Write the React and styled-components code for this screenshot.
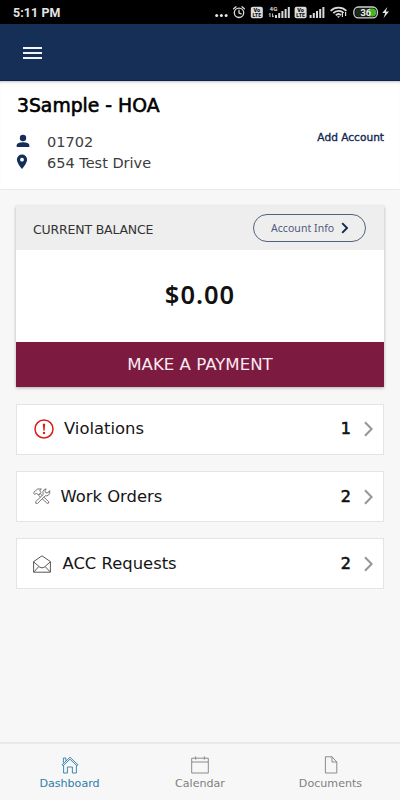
import React from "react"
import styled, { createGlobalStyle } from "styled-components"

const rows = [
    { id: 1, text: "Violations", count: 1, icon: <AlertIcon />, gap: 9 },
    { id: 2, text: "Work Orders", count: 2, icon: <ToolsIcon />, gap: 9.5 },
    { id: 3, text: "ACC Requests", count: 2, icon: <EnvelopeIcon />, gap: 11.5 },
]

const tabs = [
    { id: 1, text: "Dashboard", icon: <HomeIcon />, active: true },
    { id: 2, text: "Calendar", icon: <CalendarIcon /> },
    { id: 3, text: "Documents", icon: <DocumentIcon /> },
]

export default function App() {
    return (
        <Screen>
            <GlobalStyle />
            <StatusBar>
                <Time>5:11 PM</Time>
                <StatusIcons />
            </StatusBar>
            <Header>
                <MenuButton aria-label="Menu">
                    <span />
                    <span />
                    <span />
                </MenuButton>
            </Header>

            <Account>
                <AccountName>3Sample - HOA</AccountName>
                <AccountBody>
                    <div>
                        <AccountLine>
                            <PersonIcon />
                            <span>01702</span>
                        </AccountLine>
                        <AccountLine>
                            <PinIcon />
                            <span>654 Test Drive</span>
                        </AccountLine>
                    </div>
                    <AddAccount>Add Account</AddAccount>
                </AccountBody>
            </Account>

            <Content>
                <Card>
                    <CardHeader>
                        <CardTitle>CURRENT BALANCE</CardTitle>
                        <InfoButton>
                            Account Info
                            <svg width="8" height="12" viewBox="0 0 8 12" fill="none" stroke="#12284f" strokeWidth="1.9">
                                <path d="M1.2 1.2L6 6L1.2 10.8" />
                            </svg>
                        </InfoButton>
                    </CardHeader>
                    <Balance>$0.00</Balance>
                    <PayButton>MAKE A PAYMENT</PayButton>
                </Card>

                {rows.map((row) => (
                    <Row key={row.id}>
                        {row.icon}
                        <RowText $gap={row.gap}>{row.text}</RowText>
                        <Count>{row.count}</Count>
                        <svg width="9" height="16" viewBox="0 0 9 16" fill="none" stroke="#969696" strokeWidth="2">
                            <path d="M1 1.2L7.6 8L1 14.8" />
                        </svg>
                    </Row>
                ))}
            </Content>

            <TabBar>
                {tabs.map((tab) => (
                    <Tab key={tab.id} $active={tab.active}>
                        {tab.icon}
                        {tab.text}
                    </Tab>
                ))}
            </TabBar>
        </Screen>
    )
}

function Signal() {
    return (
        <g fill="#d8d8d8">
            <rect x="0" y="8" width="2" height="3" />
            <rect x="3.2" y="6" width="2" height="5" />
            <rect x="6.4" y="4" width="2" height="7" />
            <rect x="9.6" y="2" width="2" height="9" />
            <rect x="12.8" y="0" width="2" height="11" />
        </g>
    )
}

function Volte() {
    return (
        <g>
            <rect width="12" height="11.5" rx="2" fill="#dcdcdc" />
            <g fill="#111" fontFamily="Roboto, sans-serif" fontSize="5.6" fontWeight="900" textAnchor="middle">
                <text x="6" y="5.4">Vo</text>
                <text x="6" y="10.5" fontSize="5.2">LTE</text>
            </g>
        </g>
    )
}

function StatusIcons() {
    return (
        <svg width="190" height="24" viewBox="210 0 190 24">
            <g fill="#e6e6e6">
                <circle cx="216.7" cy="15.6" r="1.5" />
                <circle cx="221.4" cy="15.6" r="1.5" />
                <circle cx="226.1" cy="15.6" r="1.5" />
            </g>
            <g fill="none" stroke="#dcdcdc" strokeWidth="1.3" strokeLinecap="round">
                <circle cx="239" cy="12.8" r="4.7" />
                <path d="M239 10.2V13L241.2 13.8M233.6 8.8L236 6.8M244.4 8.8L242 6.8" />
            </g>
            <g transform="translate(250.8 6.8)"><Volte /></g>
            <text x="269.6" y="10.6" fill="#dcdcdc" fontFamily="Roboto, sans-serif" fontSize="6.2" fontWeight="700">4G</text>
            <path d="M270 13.5V17M269 14.5L270 13.3M272.6 13.5V17M272.6 17.2L273.8 15.8" stroke="#d0d0d0" strokeWidth="1" fill="none" />
            <g transform="translate(275 7)"><Signal /></g>
            <g transform="translate(294.6 6.8)"><Volte /></g>
            <g transform="translate(309.6 7)"><Signal /></g>
            <g fill="none" stroke="#dcdcdc" strokeWidth="1.7">
                <path d="M330.6 10.8C335 6.5 342 6.5 346.4 10.8M333.2 13.2C336.4 10.2 340.8 10.2 343.6 12.8M335.8 15.4C337.4 13.8 339.6 13.8 341 15.2" />
                <path d="M342.4 13V17M345.6 12V16" strokeWidth="1.2" />
            </g>
            <path d="M337 16.2H340L338.5 18Z" fill="#dcdcdc" />
            <rect x="353.8" y="7" width="23.6" height="10.8" rx="4.6" fill="#111" stroke="#d0d0d0" strokeWidth="1.3" />
            <path d="M369 8.5H372.6A3.6 3.9 0 0 1 372.6 16.4H369Z" fill="#45b52c" />
            <rect x="355.4" y="8.5" width="13.6" height="7.9" rx="3.4" fill="#1c2a1a" />
            <text x="360.6" y="15.9" fill="#eee" fontFamily="Roboto, sans-serif" fontSize="9.2" fontWeight="700">36</text>
            <path d="M387.4 7L382.2 13H385.2L383.6 18L389 11.6H385.8Z" fill="#e6e6e6" />
        </svg>
    )
}

function PersonIcon() {
    return (
        <svg width="14" height="14" viewBox="0 0 14 14" fill="#152d59">
            <circle cx="7" cy="4" r="3.2" />
            <path d="M.7 13V11.2C.7 9 4.6 8.2 7 8.2S13.3 9 13.3 11.2V13Z" />
        </svg>
    )
}

function PinIcon() {
    return (
        <svg width="14" height="16" viewBox="0 0 14 16" fill="#152d59">
            <path fillRule="evenodd" d="M6 .5A5.1 5.1 0 0 0 .9 5.6C.9 9.4 6 15 6 15S11.1 9.4 11.1 5.6A5.1 5.1 0 0 0 6 .5ZM6 3.8A1.9 1.9 0 1 1 6 7.6A1.9 1.9 0 0 1 6 3.8Z" />
        </svg>
    )
}

function AlertIcon() {
    return (
        <svg width="22" height="22" viewBox="0 0 22 22" fill="none" stroke="#dc1b1b">
            <circle cx="11" cy="11" r="9" strokeWidth="1.5" />
            <path d="M9.8 5.8H12.2L11.6 12.8H10.4Z" fill="#dc1b1b" stroke="none" />
            <circle cx="11" cy="15" r="1.2" fill="#dc1b1b" stroke="none" />
        </svg>
    )
}

function ToolsIcon() {
    return (
        <svg width="18" height="17" viewBox="0 0 18 17" fill="#fff" stroke="#555" strokeWidth=".8" strokeLinejoin="round">
            <path d="M7.2 5.6L15.6 13.6Q16.4 15.6 14.2 15.4L5.6 7.4Z" />
            <path d="M.8 5.4L1.2 3.8L4.6 1H8.4L6.8 2.4L7.8 4.6L5.4 7L3.4 5L1.8 6.6Z" />
            <path d="M2.6 13.6L10.2 6.6Q9 3 11.4 1.4L13.2 .9L11.8 3L13 5L15.4 4.6L16.6 2.6Q17.6 5.6 15.4 7.2Q13.8 8.2 12 7.8L4.6 15.4Q2 16 2.6 13.6Z" />
        </svg>
    )
}

function EnvelopeIcon() {
    return (
        <svg width="18" height="18" viewBox="0 0 18 18" fill="none" stroke="#444" strokeWidth=".9">
            <path d="M.6 6.6L9 .8L17.4 6.6V17.2H.6Z" />
            <path d="M.6 6.8L6.8 12.2Q9 13.6 11.2 12.2L17.4 6.8M1 16.8L5.8 11.6M17 16.8L12.2 11.6" />
        </svg>
    )
}

function HomeIcon() {
    return (
        <svg width="18" height="18" viewBox="0 0 18 18" fill="none" stroke="currentColor" strokeWidth=".9">
            <path d="M1 8.8L9 1.2L17 8.8L16 9.8L9 3.2L2 9.8ZM2.4 6.8V2H4.8V4.6M2.6 9.6V17H6.4V11H11.4V17H15.4V9.6" />
        </svg>
    )
}

function CalendarIcon() {
    return (
        <svg width="18" height="18" viewBox="0 0 18 18" fill="none" stroke="currentColor" strokeWidth=".9">
            <path d="M.7 2.2H17.3V17H.7ZM.7 6H17.3M4.6 .4V3.6M13.4 .4V3.6" />
        </svg>
    )
}

function DocumentIcon() {
    return (
        <svg width="18" height="18" viewBox="0 0 18 18" fill="none" stroke="currentColor" strokeWidth=".9">
            <path d="M3.4 .8H10L14.8 6V17H3.4ZM10 .8V6H14.8" />
        </svg>
    )
}

const GlobalStyle = createGlobalStyle`
    * {
        box-sizing: border-box;
    }

    body {
        margin: 0;
        background: #f7f7f7;
        font-family: 'DejaVu Sans', sans-serif;
    }

    button {
        font-family: inherit;
        border: 0;
        padding: 0;
    }

    svg {
        display: block;
        flex-shrink: 0;
    }
`

const Screen = styled.div`
    display: flex;
    flex-direction: column;
    width: 400px;
    height: 800px;
    overflow: hidden;
    white-space: nowrap;
`

const StatusBar = styled.div`
    display: flex;
    justify-content: space-between;
    align-items: center;
    height: 24px;
    padding-left: 13px;
    background: #000;
`

const Time = styled.span`
    padding-top: 1px;
    font-family: Roboto, sans-serif;
    font-size: 12.4px;
    font-weight: 700;
    letter-spacing: 0.1px;
    color: #e4e4e4;
`

const Header = styled.header`
    display: flex;
    align-items: center;
    height: 57px;
    padding: 0 23px;
    background: #162f56;
    border-bottom: 1px solid #10204a;
`

const MenuButton = styled.button`
    display: flex;
    flex-direction: column;
    gap: 3px;
    width: 19px;
    padding-top: 1px;
    background: none;
    span {
        height: 2px;
        background: #f2f5f9;
    }
`

const Account = styled.section`
    height: 109px;
    padding: 13px 16px 0 17px;
    background: #fff;
    border-bottom: 1px solid #e9e9e9;
    box-shadow: inset 0 3px 3px -2px rgba(0, 0, 0, 0.25);
`

const AccountName = styled.h1`
    margin: 0;
    font-size: 18.8px;
    font-weight: 400;
    line-height: 24px;
    color: #000;
    -webkit-text-stroke: 0.6px #000;
`

const AccountBody = styled.div`
    display: flex;
    justify-content: space-between;
    padding-top: 13px;
`

const AccountLine = styled.div`
    display: flex;
    align-items: center;
    height: 21px;
    font-size: 14.5px;
    color: #3c3c3c;
    svg {
        margin: 0 17px 2px -1px;
    }
`

const AddAccount = styled.a`
    font-size: 10.6px;
    line-height: 13px;
    color: #12284f;
    -webkit-text-stroke: 0.35px #12284f;
`

const Content = styled.main`
    display: flex;
    flex-direction: column;
    gap: 16px;
    flex: 1;
    padding: 16px 16px 0;
`

const Card = styled.section`
    margin-bottom: 1px;
    background: #fff;
    box-shadow: 0 1px 3px rgba(0, 0, 0, 0.3);
`

const CardHeader = styled.div`
    display: flex;
    justify-content: space-between;
    align-items: center;
    height: 44px;
    padding: 0 18px 0 17px;
    background: #eee;
`

const CardTitle = styled.span`
    padding-top: 3px;
    font-size: 12.5px;
    letter-spacing: -0.18px;
    color: #333;
`

const InfoButton = styled.button`
    display: flex;
    align-items: center;
    gap: 7px;
    width: 113px;
    height: 28px;
    padding-left: 17px;
    font-family: 'Noto Sans', sans-serif;
    font-size: 10.5px;
    letter-spacing: 0.05px;
    color: #4e5a7c;
    background: transparent;
    border: 1px solid #52627d;
    border-radius: 14px;
`

const Balance = styled.div`
    height: 92px;
    font-family: 'Noto Sans', sans-serif;
    font-size: 25.5px;
    font-weight: 600;
    line-height: 89px;
    letter-spacing: 1px;
    text-align: center;
    color: #111;
`

const PayButton = styled.button`
    display: block;
    width: 100%;
    height: 45px;
    font-size: 16.6px;
    color: #fbe9f1;
    background: #7d1a3f;
`

const Row = styled.div`
    display: flex;
    align-items: center;
    height: 51px;
    padding: 0 10px 2px 16px;
    background: #fff;
    border: 1px solid #e4e4e4;
    & + & {
        padding-bottom: 0;
    }
`

const RowText = styled.span`
    flex: 1;
    padding-left: ${(props) => props.$gap}px;
    font-size: 16.4px;
    color: #151515;
`

const Count = styled.span`
    margin-right: 13px;
    font-size: 16px;
    color: #111;
    -webkit-text-stroke: 0.6px #111;
`

const TabBar = styled.nav`
    display: grid;
    grid-template-columns: 139px 122px 139px;
    height: 58px;
    border-top: 2px solid #e9e9e9;
    background: #f7f7f7;
`

const Tab = styled.a`
    display: flex;
    flex-direction: column;
    align-items: center;
    gap: 2px;
    padding-top: 12px;
    font-size: 11.1px;
    line-height: 15px;
    color: ${(props) => (props.$active ? "#2f7da8" : "#808080")};
`
